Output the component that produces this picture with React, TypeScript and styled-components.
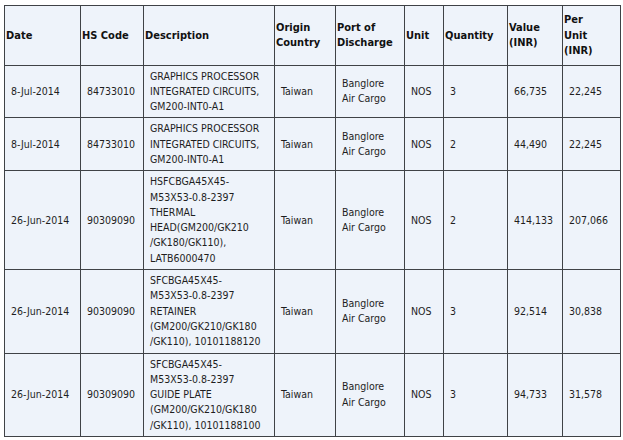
import React from "react";
import styled, { createGlobalStyle } from "styled-components";

const Global = createGlobalStyle`
  html, body { margin: 0; padding: 0; background: #ffffff; }
  body { font-family: "DejaVu Sans Condensed", "DejaVu Sans", sans-serif; font-stretch: condensed; }
`;

const Page = styled.div`
  padding: 5px 0 0 4px;
`;

const Table = styled.table`
  border-collapse: collapse;
  table-layout: fixed;
  width: 617px;
  background: #eef3fa;
`;

const Th = styled.th`
  border: 1px solid #3f4246;
  padding: 6px 1px;
  text-align: left;
  vertical-align: middle;
  font-weight: bold;
  font-size: 11px;
  line-height: 15.5px;
  color: #111;
`;

const Td = styled.td<{ $align?: string }>`
  border: 1px solid #3f4246;
  padding: 3px 6px;
  text-align: ${(p) => p.$align || "left"};
  vertical-align: middle;
  font-size: 10.5px;
  line-height: 15.3px;
  color: #1e1e1e;
  white-space: nowrap;
`;

type Row = {
  date: string;
  hs: string;
  desc: string[];
  origin: string;
  port: string[];
  unit: string;
  qty: string;
  value: string;
  per: string;
};

const widths = [76, 63, 131, 61, 69, 39, 64, 55, 58];

const headers: string[][] = [
  ["Date"],
  ["HS Code"],
  ["Description"],
  ["Origin", "Country"],
  ["Port of", "Discharge"],
  ["Unit"],
  ["Quantity"],
  ["Value", "(INR)"],
  ["Per", "Unit", "(INR)"],
];

const port = ["Banglore", "Air Cargo"];

const rows: Row[] = [
  {
    date: "8-Jul-2014",
    hs: "84733010",
    desc: ["GRAPHICS PROCESSOR", "INTEGRATED CIRCUITS,", "GM200-INT0-A1"],
    origin: "Taiwan",
    port,
    unit: "NOS",
    qty: "3",
    value: "66,735",
    per: "22,245",
  },
  {
    date: "8-Jul-2014",
    hs: "84733010",
    desc: ["GRAPHICS PROCESSOR", "INTEGRATED CIRCUITS,", "GM200-INT0-A1"],
    origin: "Taiwan",
    port,
    unit: "NOS",
    qty: "2",
    value: "44,490",
    per: "22,245",
  },
  {
    date: "26-Jun-2014",
    hs: "90309090",
    desc: [
      "HSFCBGA45X45-",
      "M53X53-0.8-2397",
      "THERMAL",
      "HEAD(GM200/GK210",
      "/GK180/GK110),",
      "LATB6000470",
    ],
    origin: "Taiwan",
    port,
    unit: "NOS",
    qty: "2",
    value: "414,133",
    per: "207,066",
  },
  {
    date: "26-Jun-2014",
    hs: "90309090",
    desc: [
      "SFCBGA45X45-",
      "M53X53-0.8-2397",
      "RETAINER",
      "(GM200/GK210/GK180",
      "/GK110), 10101188120",
    ],
    origin: "Taiwan",
    port,
    unit: "NOS",
    qty: "3",
    value: "92,514",
    per: "30,838",
  },
  {
    date: "26-Jun-2014",
    hs: "90309090",
    desc: [
      "SFCBGA45X45-",
      "M53X53-0.8-2397",
      "GUIDE PLATE",
      "(GM200/GK210/GK180",
      "/GK110), 10101188100",
    ],
    origin: "Taiwan",
    port,
    unit: "NOS",
    qty: "3",
    value: "94,733",
    per: "31,578",
  },
];

const Lines: React.FC<{ lines: string[] }> = ({ lines }) => (
  <>
    {lines.map((l, i) => (
      <React.Fragment key={i}>
        {i > 0 && <br />}
        {l}
      </React.Fragment>
    ))}
  </>
);

export default function App() {
  return (
    <Page>
      <Global />
      <Table>
        <colgroup>
          {widths.map((w, i) => (
            <col key={i} style={{ width: w }} />
          ))}
        </colgroup>
        <thead>
          <tr>
            {headers.map((h, i) => (
              <Th key={i}>
                <Lines lines={h} />
              </Th>
            ))}
          </tr>
        </thead>
        <tbody>
          {rows.map((r, i) => (
            <tr key={i}>
              <Td>{r.date}</Td>
              <Td>{r.hs}</Td>
              <Td>
                <Lines lines={r.desc} />
              </Td>
              <Td>{r.origin}</Td>
              <Td>
                <Lines lines={r.port} />
              </Td>
              <Td>{r.unit}</Td>
              <Td>{r.qty}</Td>
              <Td>{r.value}</Td>
              <Td>{r.per}</Td>
            </tr>
          ))}
        </tbody>
      </Table>
    </Page>
  );
}
